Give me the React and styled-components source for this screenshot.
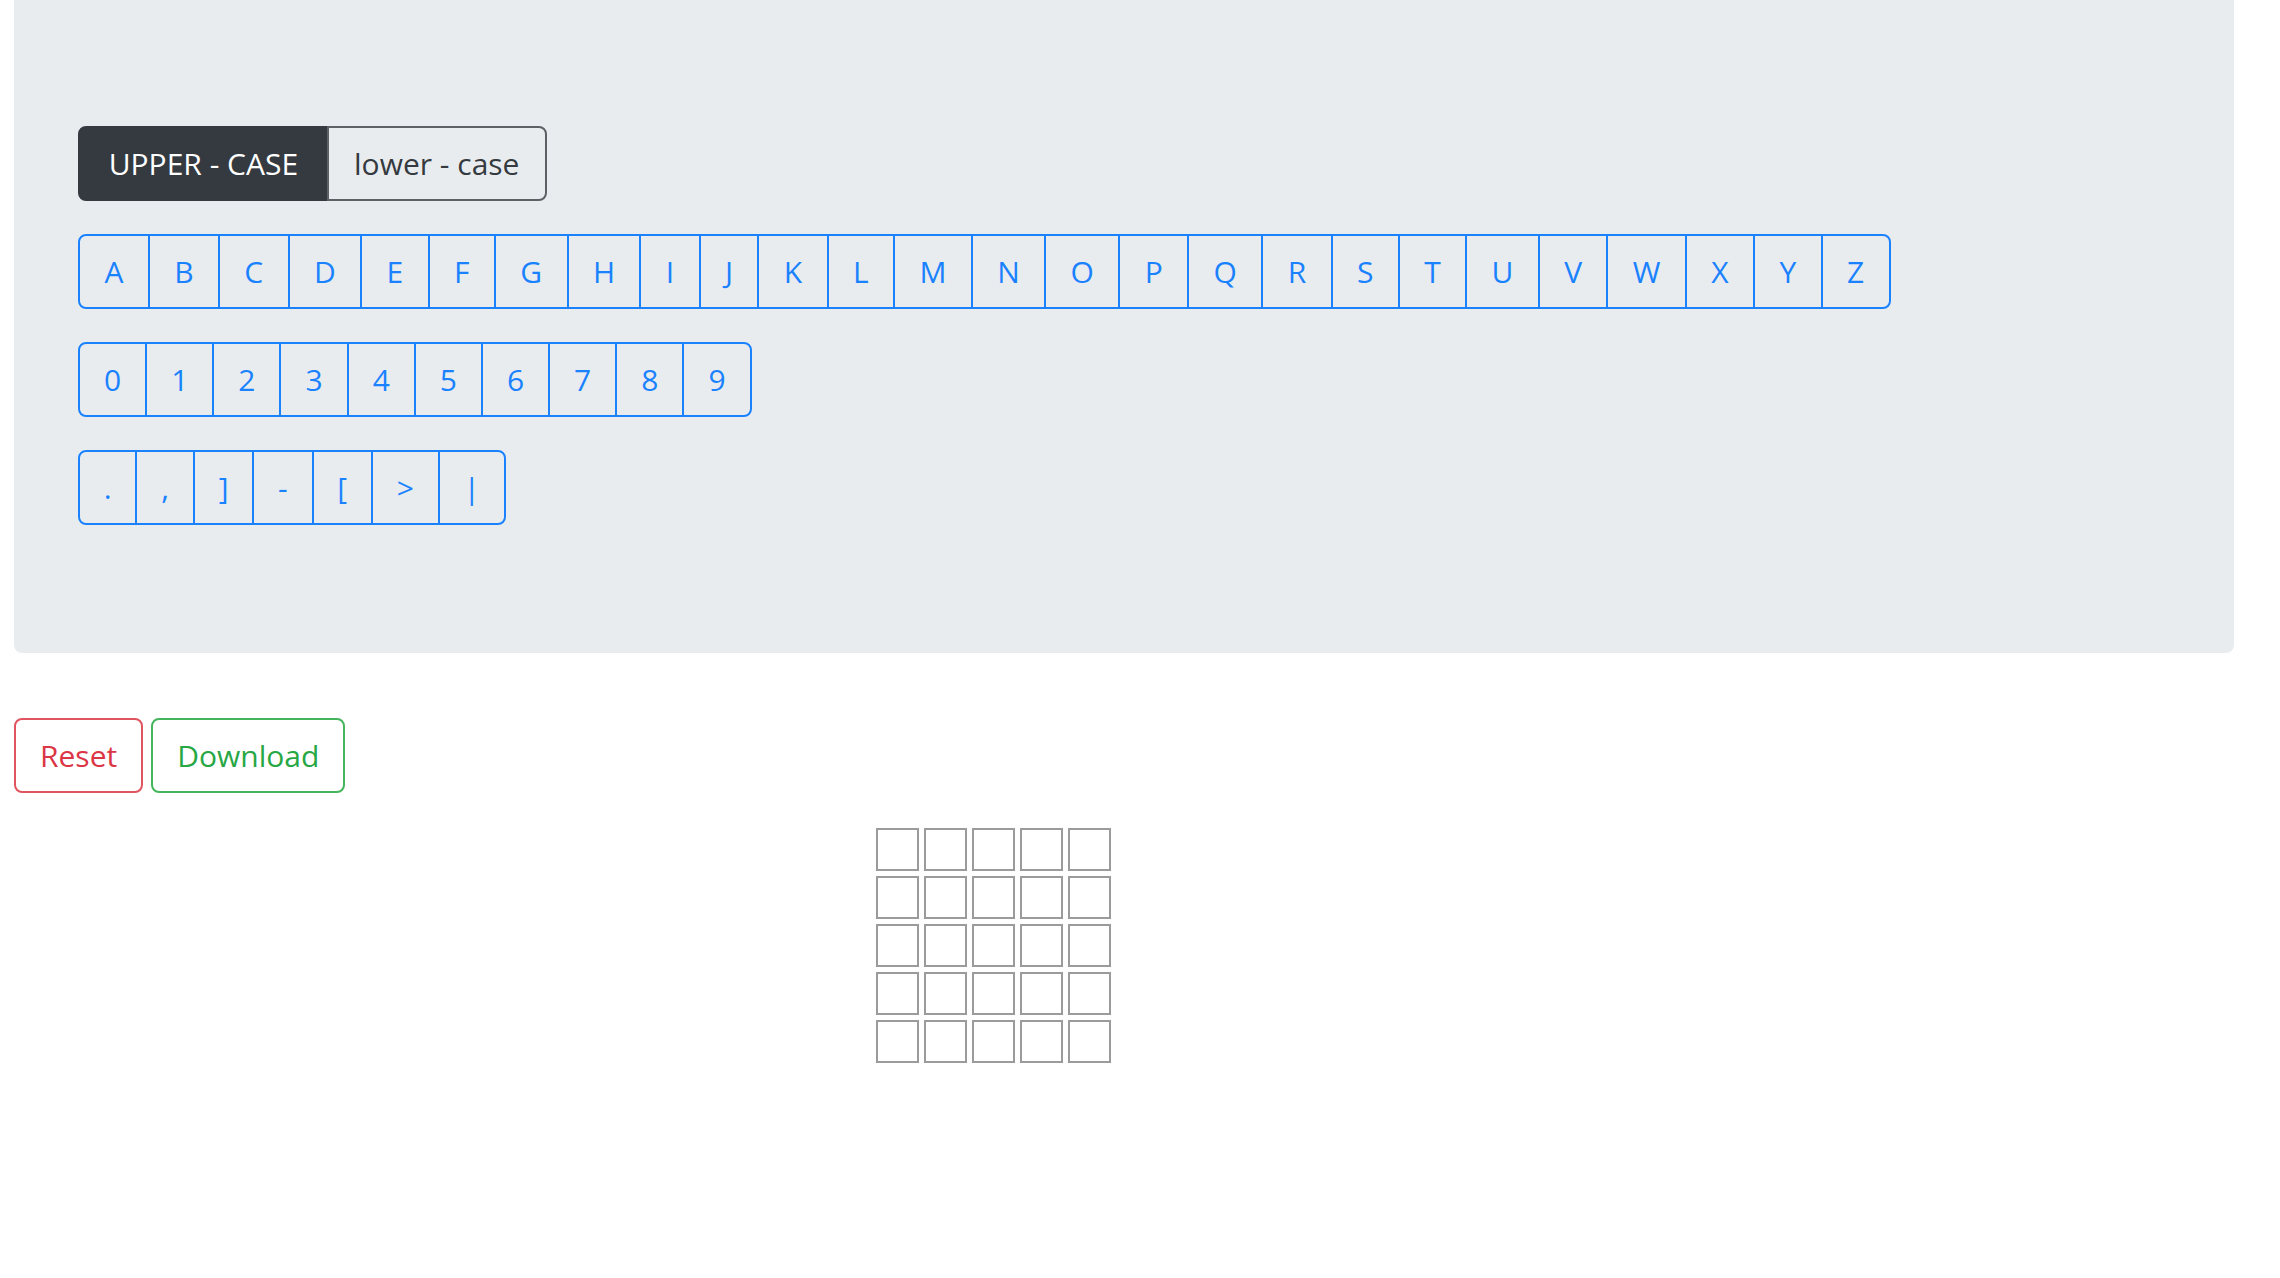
import React, { useState } from "react"
import styled, { createGlobalStyle, css } from "styled-components"

const GlobalStyle = createGlobalStyle`
    html, body {
        margin: 0;
        padding: 0;
        background: #fff;
    }

    body {
        font-family: "Open Sans", "Noto Sans", sans-serif;
        color: #212529;
    }
`

const Page = styled.div`
    padding: 0 46px 0 14px;
`

const Jumbotron = styled.section`
    display: flex;
    flex-direction: column;
    align-items: flex-start;
    gap: 33px;
    padding: 126px 64px 128px;
    background: #e9ecef;
    border-radius: 0 0 8px 8px;
`

const ButtonGroup = styled.div`
    display: inline-flex;
`

const tones = {
    primary: css`
        color: #1a82ff;
        border-color: #1a82ff;
    `,
    dark: css`
        color: #fff;
        background: #343a40;
        border-color: #343a40;
    `,
    outlineDark: css`
        color: #343a40;
        border-color: #5c6166;
    `,
    danger: css`
        color: #dc3545;
        border-color: #e0545f;
    `,
    success: css`
        color: #28a745;
        border-color: #45b55d;
    `,
}

const Button = styled.button`
    font-family: "Open Sans", "Noto Sans", sans-serif;
    font-size: 30px;
    line-height: 45px;
    font-weight: 400;
    padding: 13px ${props => props.$pad || 24}px;
    border: 2px solid;
    border-radius: 8px;
    background: transparent;
    cursor: pointer;
    white-space: nowrap;
    ${props => tones[props.$tone]}

    ${ButtonGroup} > & {
        border-radius: 0;
    }

    ${ButtonGroup} > &:not(:first-child) {
        margin-left: -2px;
    }

    ${ButtonGroup} > &:first-child {
        border-top-left-radius: 8px;
        border-bottom-left-radius: 8px;
    }

    ${ButtonGroup} > &:last-child {
        border-top-right-radius: 8px;
        border-bottom-right-radius: 8px;
    }
`

const Actions = styled.div`
    display: flex;
    gap: 8px;
    margin-top: 65px;
`

const Board = styled.div`
    display: grid;
    grid-template-columns: repeat(5, 43px);
    grid-auto-rows: 43px;
    gap: 5px;
    margin: 35px 0 0 862px;
`

const Cell = styled.div`
    box-sizing: border-box;
    border: 2px solid #9b9b9b;
    background: #fff;
`

const letters = "ABCDEFGHIJKLMNOPQRSTUVWXYZ".split("")
const digits = "0123456789".split("")
const symbols = [".", ",", "]", "-", "[", ">", "|"]

const App = () => {
    const [upper, setUpper] = useState(true)
    const shown = upper ? letters : letters.map(l => l.toLowerCase())

    return (
        <Page>
            <GlobalStyle />
            <Jumbotron>
                <ButtonGroup>
                    <Button $pad={28.7} $tone={upper ? "dark" : "outlineDark"} onClick={() => setUpper(true)}>
                        UPPER - CASE
                    </Button>
                    <Button $pad={25.3} $tone={upper ? "outlineDark" : "dark"} onClick={() => setUpper(false)}>
                        lower - case
                    </Button>
                </ButtonGroup>
                <ButtonGroup>
                    {shown.map(l => (
                        <Button key={l} $pad={24.4} $tone="primary">{l}</Button>
                    ))}
                </ButtonGroup>
                <ButtonGroup>
                    {digits.map(d => (
                        <Button key={d} $tone="primary">{d}</Button>
                    ))}
                </ButtonGroup>
                <ButtonGroup>
                    {symbols.map(s => (
                        <Button key={s} $pad={23.8} $tone="primary">{s}</Button>
                    ))}
                </ButtonGroup>
            </Jumbotron>
            <Actions>
                <Button $tone="danger">Reset</Button>
                <Button $tone="success">Download</Button>
            </Actions>
            <Board>
                {Array.from({ length: 25 }, (_, i) => (
                    <Cell key={i} />
                ))}
            </Board>
        </Page>
    )
}

export default App
